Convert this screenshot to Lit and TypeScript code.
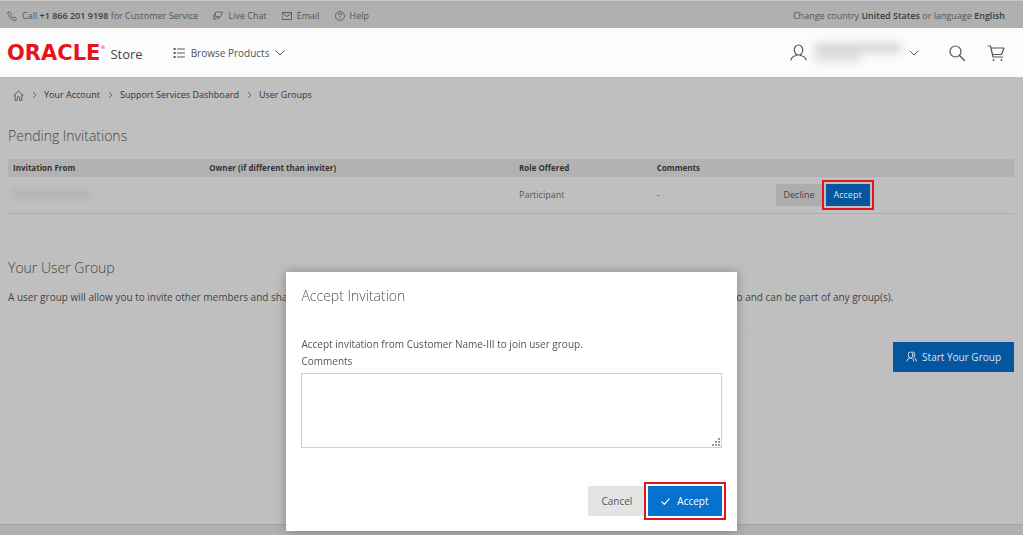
import { LitElement, html, css, svg } from "lit";
import { customElement, state } from "lit/decorators.js";

const icon = (size: number, box: string, body: unknown) => html`<svg
  class="icon" width=${size} height=${size} viewBox=${box} fill="none"
  stroke="currentColor" stroke-linecap="round" stroke-linejoin="round" aria-hidden="true">${body}</svg>`;

const phone = icon(10, "0 0 20 20", svg`<path stroke-width="1.6" d="M2 3l3-2 4 5-2 3c1 2 3 4 5 5l2-2 5 3-2 4c-6 1-16-8-15-16z"/>`);
const chat = icon(10, "0 0 20 20", svg`<path stroke-width="1.6" d="M6 2h13l-3 9h-1l-4 4 .5-4H5z M4 6H3l-2 8h2v4l4-4h4"/>`);
const mail = icon(10, "0 0 20 20", svg`<path stroke-width="1.8" d="M1 3h18v14H1z M1 4l9 7 9-7"/>`);
const help = icon(10, "0 0 20 20", svg`<circle cx="10" cy="10" r="9" stroke-width="1.6"/><path stroke-width="1.8" d="M7 7.500q0-3 3-3t3 3q0 1.500-2 2.500-1 .5-1 2M10 14.800v.4"/>`);
const list = icon(12, "0 0 12 12", svg`<path stroke-width="1" d="M4.500 2h7M4.500 6h7M4.500 10h7"/><path stroke-width="1.800" stroke-linecap="square" d="M1.500 2h.2M1.500 6h.2M1.500 10h.2"/>`);
const chevron = icon(10, "0 0 10 10", svg`<path d="M1 3l4 4 4-4"/>`);
const arrow = icon(6, "0 0 6 6", svg`<path stroke-width=".8" d="M2 0l3 3-3 3"/>`);
const home = icon(11, "0 0 12 12", svg`<path d="M1 6l5-5 5 5M2.300 5v6.300h2.500V8q0-1 1.200-1t1.200 1v3.300h2.500V5"/>`);
const person = icon(17, "0 0 17 17", svg`<ellipse cx="8.500" cy="6" rx="4.200" ry="5" stroke-width="1.200"/><path stroke-width="1.200" d="M1 16q.5-3.500 5.500-4.500v-1M16 16q-.5-3.500-5.500-4.500v-1"/>`);
const search = icon(16, "0 0 16 16", svg`<circle cx="6.500" cy="6.500" r="5.500" stroke-width="1.200"/><path stroke-width="1.400" d="M10.500 10.500l5 5"/>`);
const cart = icon(18, "0 0 18 18", svg`<path stroke-width="1.200" d="M1 2h2.500l2.500 11h9.500M4 4h13l-2.500 6.500H5.500"/><path stroke-width="1.800" d="M6.500 16v.1M14.500 16v.1"/>`);
const group = icon(11, "0 0 12 12", svg`<ellipse cx="5" cy="4.300" rx="2.600" ry="3.300"/><path d="M.7 11q.3-2.500 3.300-3.300M5.800 7.700q1.700.5 2.500 2v1.300M7.300 1q2.400 0 2.400 3 0 2-1.200 3 2.500.8 2.800 4"/>`);
const check = icon(9, "0 0 10 10", svg`<path stroke-width="1.300" d="M1 5.500l2.700 2.700L9 2"/>`);

@customElement("app-root")
export class AppRoot extends LitElement {
  @state() private comment = "";

  static styles = css`
    :host { display: block; min-height: 100vh; background: #bfbfbf; color: #444;
      font: 10px/14px "Open Sans", "Noto Sans", sans-serif; }
    * { box-sizing: border-box; }
    .page { min-height: 100vh; display: flex; flex-direction: column; }
    a { color: inherit; text-decoration: none; }
    .icon { display: block; flex: none; }
    button { font: inherit; color: inherit; border: 0; background: none; padding: 0; display: inline-flex; align-items: center; justify-content: center; }
    .top { display: flex; align-items: center; height: 28px; padding: 2px 18px 0 7px; background: #b0b0b0; border-top: 1px solid #c8c8c8; font-size: 9px; color: #555; }
    .top a { display: flex; align-items: center; gap: 5px; margin-right: 15px; white-space: pre; }
    .top b { color: #3c3c3c; font-weight: 600; }
    .top .region { display: block; margin: 0 0 0 auto; }
    header { display: flex; align-items: center; height: 49px; padding: 0 18px 0 7px; background: #fcfcfc; color: #555; }
    .brand { display: flex; align-items: center; }
    .logo { font: bold 21px/24px "DejaVu Sans", sans-serif; color: #e8141c; }
    .reg { font: 5px/5px "DejaVu Sans", sans-serif; color: #e8141c; align-self: flex-start; padding-top: 4px; }
    .store { font-size: 13px; line-height: 20px; color: #444; padding: 2px 0 0 5px; }
    .browse { gap: 6px; margin-left: 30px; color: #555; }
    .account { gap: 8px; margin-left: auto; }
    .redacted { display: flex; flex-direction: column; filter: blur(4px); }
    .redacted i { display: block; width: 86px; height: 10px; background: #d6d6d6; }
    .redacted i + i { width: 46px; background: #e2e2e2; }
    .tool { margin-left: 30px; }
    .tool + .tool { margin-left: 22px; }
    .crumbs { display: flex; align-items: center; gap: 7px; height: 36px; padding: 0 13px; font-size: 9px; color: #333; }
    .crumbs .icon { color: #555; }
    main { flex: 1; padding: 0 9px 0 8px; }
    h1, h2 { margin: 0; font-weight: 300; font-size: 14px; line-height: 20px; color: #444; }
    h1 { padding-top: 13px; }
    table { width: 100%; margin-top: 13px; border-collapse: collapse; table-layout: fixed; font-size: 9px; line-height: 12px; text-align: left; }
    th { height: 18px; padding: 0 5px; background: #b2b2b2; font-size: 8px; font-weight: 700; color: #333; }
    td { height: 36px; padding: 0 5px; color: #555; border-bottom: 1px solid #adadad; }
    .c1 { width: 19.5%; } .c2 { width: 30.8%; } .c3 { width: 13.7%; } .c4 { width: 11.8%; }
    .name { display: block; width: 76px; height: 9px; background: #b2b2b2; filter: blur(3px); }
    .row { display: flex; }
    .small { height: 22px; padding: 0 8px; background: #adadad; color: #444; }
    .primary { position: relative; background: #0572ce; color: #fff; }
    .primary::after { content: ""; position: absolute; inset: -4px; border: 2px solid #e0161c; }
    .small.primary { background: #0456a0; color: #d8e4ee; margin-left: 3px; }
    h2.section { margin-top: 44px; }
    .text { margin: 12px 0 0; padding-bottom: 30px; border-bottom: 1px solid #b9b9b9; }
    .line { display: flex; justify-content: space-between; width: 88%; }
    .actions { display: flex; justify-content: flex-end; padding-top: 7px; }
    .start { height: 30px; padding: 0 13px; gap: 5px; background: #0456a0; color: #d8e4ee; }
    footer { height: 11px; background: #b0b0b0; border-top: 1px solid #a4a4a4; }
    .layer { position: fixed; inset: 0; display: flex; justify-content: center; align-items: flex-end; padding-bottom: 4px; }
    .dialog { width: 44%; min-width: 320px; padding: 14px 15px 15px; background: #fff; color: #555; box-shadow: 0 0 10px rgba(0, 0, 0, .3); }
    .dialog h2 { color: #555; }
    .dialog p { margin: 29px 0 0; line-height: 18px; }
    .dialog label { display: block; line-height: 16px; }
    textarea { display: block; width: 100%; height: 75px; margin-top: 4px; padding: 4px; border: 1px solid #d0d0d0; font: inherit; color: inherit; resize: vertical; outline: 0; }
    textarea::-webkit-resizer { background: url("data:image/svg+xml,%3Csvg xmlns='http://www.w3.org/2000/svg' width='10' height='10'%3E%3Cpath fill='%23999' d='M7 1h2v2h-2zM7 4h2v2h-2zM4 4h2v2h-2zM7 7h2v2h-2zM4 7h2v2h-2zM1 7h2v2h-2z'/%3E%3C/svg%3E") right bottom no-repeat; }
    .buttons { display: flex; justify-content: flex-end; padding-top: 38px; }
    .big { height: 30px; padding: 0 13px; }
    .cancel { background: #e4e4e4; }
    .big.primary { gap: 7px; margin-left: 3px; }
  `;

  render() {
    return html`
      <div class="page">
        <nav class="top" aria-label="Support">
          <a href="#">${phone}<span>Call <b>+1 866 201 9198</b> for Customer Service</span></a>
          <a href="#">${chat}<span>Live Chat</span></a>
          <a href="#">${mail}<span>Email</span></a>
          <a href="#">${help}<span>Help</span></a>
          <a class="region" href="#">Change country <b>United States</b> or language <b>English</b></a>
        </nav>
        <header>
          <a class="brand" href="#"><span class="logo">ORACLE</span><span class="reg">®</span><span class="store">Store</span></a>
          <button class="browse">${list}Browse Products${chevron}</button>
          <button class="account" aria-label="Account">${person}<span class="redacted"><i></i><i></i></span>${chevron}</button>
          <button class="tool" aria-label="Search">${search}</button>
          <button class="tool" aria-label="Cart">${cart}</button>
        </header>
        <nav class="crumbs" aria-label="Breadcrumb">
          <a href="#" aria-label="Home">${home}</a>${arrow}<a href="#">Your Account</a>${arrow}<a href="#">Support Services Dashboard</a>${arrow}<span>User Groups</span>
        </nav>
        <main>
          <h1>Pending Invitations</h1>
          <table>
            <thead><tr>
              <th class="c1">Invitation From</th><th class="c2">Owner (if different than inviter)</th>
              <th class="c3">Role Offered</th><th class="c4">Comments</th><th></th>
            </tr></thead>
            <tbody><tr>
              <td><span class="name"></span></td><td></td><td>Participant</td><td>-</td>
              <td><div class="row"><button class="small">Decline</button><button class="small primary">Accept</button></div></td>
            </tr></tbody>
          </table>
          <h2 class="section">Your User Group</h2>
          <div class="text"><div class="line">
            <span>A user group will allow you to invite other members and sha</span>
            <span>o and can be part of any group(s).</span>
          </div></div>
          <div class="actions"><button class="start">${group}Start Your Group</button></div>
        </main>
        <footer></footer>
      </div>
      <div class="layer">
        <section class="dialog" role="dialog" aria-labelledby="title">
          <h2 id="title">Accept Invitation</h2>
          <p>Accept invitation from Customer Name-III to join user group.</p>
          <label for="comments">Comments</label>
          <textarea id="comments" .value=${this.comment}
            @input=${(e: Event) => (this.comment = (e.target as HTMLTextAreaElement).value)}></textarea>
          <div class="buttons">
            <button class="big cancel">Cancel</button>
            <button class="big primary">${check}Accept</button>
          </div>
        </section>
      </div>`;
  }
}
